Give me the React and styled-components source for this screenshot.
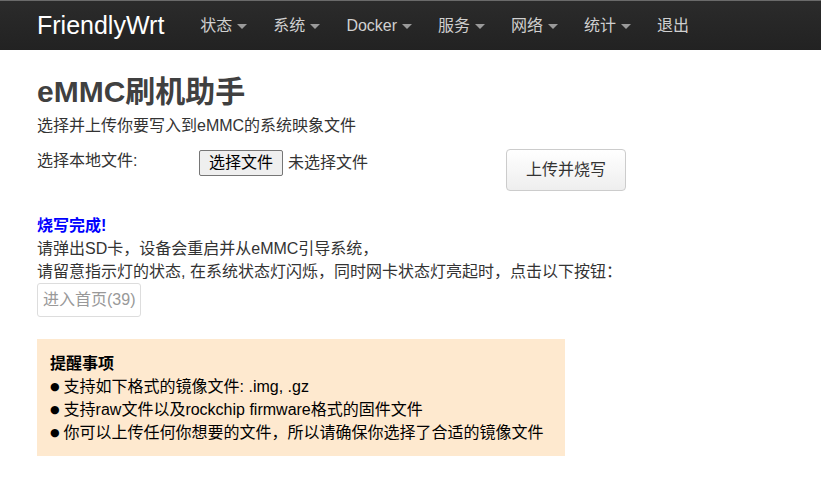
import React from "react";
import styled, { createGlobalStyle } from "styled-components";

const GlobalStyle = createGlobalStyle`
  html, body {
    margin: 0;
    padding: 0;
    background: #fff;
  }
  body {
    font-family: "Liberation Sans", "Noto Sans CJK SC", sans-serif;
    font-size: 16px;
    color: #333;
  }
`;

const menu = [
  { label: "状态", caret: true },
  { label: "系统", caret: true },
  { label: "Docker", caret: true },
  { label: "服务", caret: true },
  { label: "网络", caret: true },
  { label: "统计", caret: true },
  { label: "退出", caret: false },
];

const notes = [
  "支持如下格式的镜像文件: .img, .gz",
  "支持raw文件以及rockchip firmware格式的固件文件",
  "你可以上传任何你想要的文件，所以请确保你选择了合适的镜像文件",
];

export default function App() {
  return (
    <>
      <GlobalStyle />
      <Navbar>
        <Brand>FriendlyWrt</Brand>
        <Menu>
          {menu.map((item) => (
            <MenuItem key={item.label}>
              {item.label}
              {item.caret && <Caret />}
            </MenuItem>
          ))}
        </Menu>
      </Navbar>
      <Main>
        <Title>eMMC刷机助手</Title>
        <Subtitle>选择并上传你要写入到eMMC的系统映象文件</Subtitle>
        <FormRow>
          <Label>选择本地文件:</Label>
          <FilePicker>
            <PickButton>选择文件</PickButton>
            <span>未选择文件</span>
          </FilePicker>
          <UploadButton>上传并烧写</UploadButton>
        </FormRow>
        <Status>
          <Done>烧写完成!</Done>
          <Line>请弹出SD卡，设备会重启并从eMMC引导系统，</Line>
          <Line>请留意指示灯的状态, 在系统状态灯闪烁，同时网卡状态灯亮起时，点击以下按钮：</Line>
          <HomeButton disabled>进入首页(39)</HomeButton>
        </Status>
        <Notice>
          <NoticeTitle>提醒事项</NoticeTitle>
          {notes.map((n) => (
            <NoticeLine key={n}>
              <Bullet>●</Bullet>
              {n}
            </NoticeLine>
          ))}
        </Notice>
      </Main>
    </>
  );
}

const Navbar = styled.header`
  height: 50px;
  box-sizing: border-box;
  display: flex;
  align-items: center;
  padding: 0 37px;
  background: linear-gradient(to bottom, #2b2b2b, #222);
  border-top: 1px solid #6a6a6a;
`;

const Brand = styled.div`
  font-size: 25px;
  line-height: 30px;
  color: #fff;
  margin-right: 23px;
  margin-top: -2px;
`;

const Menu = styled.nav`
  display: flex;
  align-items: center;
`;

const MenuItem = styled.div`
  display: flex;
  align-items: center;
  padding: 0 13px;
  font-size: 16px;
  line-height: 20px;
  color: #d0d0d0;
`;

const Caret = styled.span`
  width: 0;
  height: 0;
  margin-left: 5px;
  margin-top: 2px;
  border-top: 5px solid #9a9a9a;
  border-left: 5px solid transparent;
  border-right: 5px solid transparent;
`;

const Main = styled.main`
  padding: 24px 37px 30px;
`;

const Title = styled.h1`
  margin: 0;
  font-size: 30px;
  line-height: 36px;
  font-weight: bold;
  color: #404040;
`;

const Subtitle = styled.p`
  margin: 5px 0 0;
  line-height: 22px;
`;

const FormRow = styled.div`
  display: grid;
  grid-template-columns: 162px 307px auto;
  align-items: start;
  margin-top: 12px;
`;

const Label = styled.label`
  line-height: 24px;
`;

const FilePicker = styled.div`
  display: flex;
  align-items: center;
  gap: 5px;
  margin-top: 1px;
  line-height: 22px;
`;

const PickButton = styled.span`
  box-sizing: border-box;
  height: 26px;
  padding: 1px 9px 0;
  border: 1px solid #767676;
  border-radius: 2px;
  background: #efefef;
  color: #000;
  line-height: 22px;
`;

const UploadButton = styled.button`
  justify-self: start;
  box-sizing: border-box;
  height: 42px;
  padding: 0 19px;
  font: inherit;
  line-height: 20px;
  color: #333;
  background: linear-gradient(to bottom, #fff, #eee);
  border: 1px solid #ccc;
  border-radius: 4px;
`;

const Status = styled.section`
  margin-top: 23px;
  line-height: 23px;
`;

const Done = styled.div`
  font-weight: bold;
  color: #00f;
`;

const Line = styled.div``;

const HomeButton = styled.button`
  display: block;
  box-sizing: border-box;
  height: 34px;
  padding: 0 5px;
  font: inherit;
  line-height: 22px;
  color: #999;
  background: #fff;
  border: 1px solid #ddd;
  border-radius: 3px;
`;

const Notice = styled.section`
  box-sizing: border-box;
  width: 528px;
  margin-top: 22px;
  padding: 13px 13px 12px;
  background: #fee9cf;
  color: #000;
  line-height: 23px;
`;

const NoticeTitle = styled.div`
  font-weight: bold;
`;

const NoticeLine = styled.div`
  display: flex;
  align-items: center;
`;

const Bullet = styled.span`
  font-family: "DejaVu Sans", sans-serif;
  font-size: 11px;
  margin-right: 4px;
`;
